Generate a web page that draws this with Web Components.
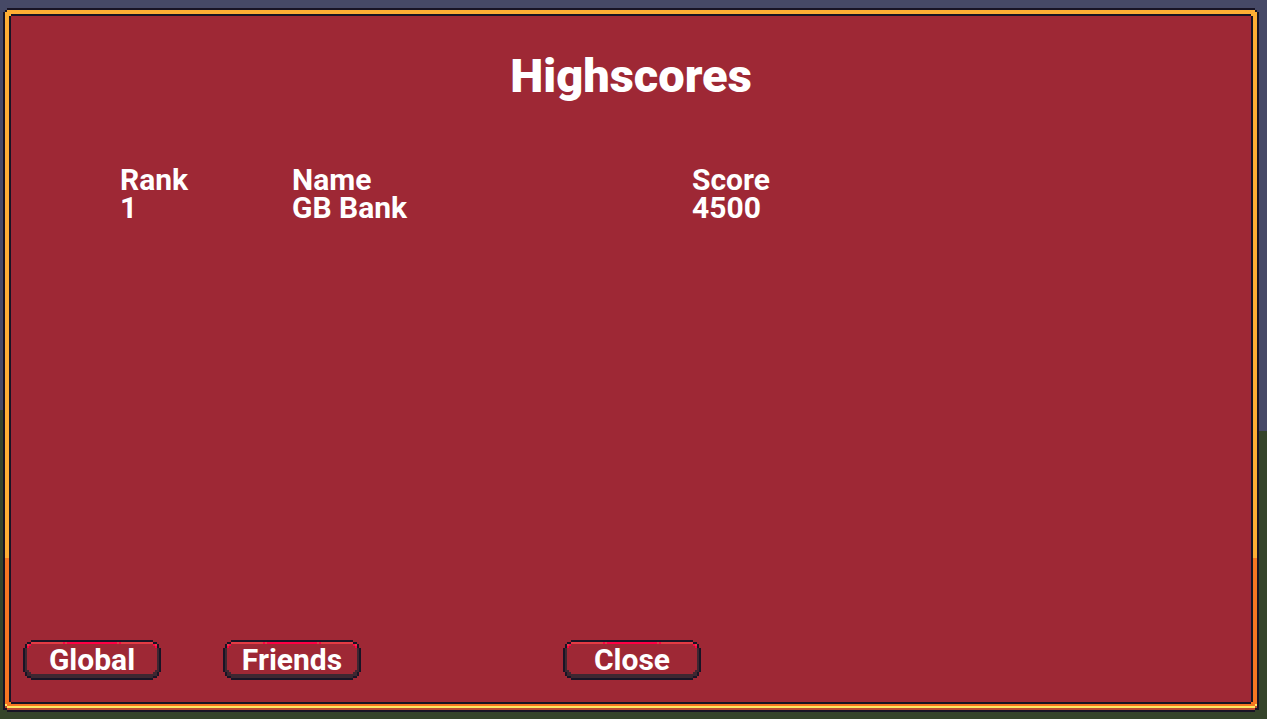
<!DOCTYPE html>
<html lang="en">
<head>
<meta charset="utf-8">
<meta name="viewport" content="width=device-width, initial-scale=1">
<title>Highscores</title>
<style>
  body {
    margin: 0;
    color: #fff;
    font-family: Roboto, "Liberation Sans", sans-serif;
    background: #3a4466;
  }
</style>
</head>
<body>
<highscores-screen></highscores-screen>

<script>
class PixelFrame extends HTMLElement {
  constructor() {
    super();
    this.attachShadow({ mode: 'open' });
    this.shadowRoot.innerHTML = `
      <style>
        :host {
          --cut: polygon(
            2px 0, calc(100% - 2px) 0, calc(100% - 2px) 2px, 100% 2px,
            100% calc(100% - 2px), calc(100% - 2px) calc(100% - 2px),
            calc(100% - 2px) 100%, 2px 100%, 2px calc(100% - 2px),
            0 calc(100% - 2px), 0 2px, 2px 2px);
          display: flex;
          flex: 1;
          padding: 2px;
          background: #181425;
          clip-path: polygon(
            4px 0, calc(100% - 4px) 0, calc(100% - 4px) 2px, calc(100% - 2px) 2px,
            calc(100% - 2px) 4px, 100% 4px, 100% calc(100% - 2px),
            calc(100% - 4px) calc(100% - 2px), calc(100% - 4px) 100%,
            4px 100%, 4px calc(100% - 2px), 0 calc(100% - 2px),
            0 4px, 2px 4px, 2px 2px, 4px 2px);
        }
        .gold, .rim { display: flex; flex: 1; clip-path: var(--cut); }
        .gold {
          padding: 4px 4px 6px;
          background:
            linear-gradient(#fee761, #fee761) left bottom 4px / 2px 2px no-repeat,
            linear-gradient(#fee761, #fee761) right bottom 4px / 2px 2px no-repeat,
            linear-gradient(#be4a2f, #be4a2f) left bottom 2px / 2px 2px no-repeat,
            linear-gradient(#be4a2f, #be4a2f) right bottom 2px / 2px 2px no-repeat,
            linear-gradient(#fee761 50%, #be4a2f 50%) bottom / 100% 4px no-repeat,
            linear-gradient(#feae34 78.3%, #f77622 78.3%);
        }
        .rim { padding: 2px; background: #181425; }
        .body { display: flex; flex: 1; flex-direction: column; background: #9e2835; }
      </style>
      <div class="gold"><div class="rim"><div class="body"><slot></slot></div></div></div>
    `;
  }
}

class PixelButton extends HTMLElement {
  constructor() {
    super();
    this.attachShadow({ mode: 'open' });
    this.shadowRoot.innerHTML = `
      <style>
        :host { display: inline-block; }
        button {
          display: grid;
          place-items: center;
          width: 138px;
          height: 40px;
          padding: 0;
          border: 0;
          background: none;
          color: inherit;
          font: 700 30px/40px Roboto, "Liberation Sans", sans-serif;
          cursor: pointer;
        }
        svg, span { grid-area: 1 / 1; }
        svg { display: block; width: 138px; height: 40px; }
        button:active span { opacity: 0.8; }
      </style>
      <button type="button">
        <svg viewBox="0 0 69 20" shape-rendering="crispEdges" aria-hidden="true">
          <path fill="#3e2731" d="M1 4h1v11h1v1h1v1h61v-1h1v-1h1V4h1v12h-1v2h-2v1H4v-1H2v-2H1z"/>
          <path fill="#e43b44" d="M4 1h61v1H4zM2 2h1v1H2zM66 2h1v1h-1z"/>
          <path fill="#ff0044" d="M22 1h25v1H22zM20 1h1v1h-1zM48 1h1v1h-1zM3 2h1v1H3zM65 2h1v1h-1zM2 3h1v1H2zM66 3h1v1h-1z"/>
          <path fill="#181425" d="M4 0h61v1H4zM2 1h2v1H2zM65 1h2v1h-2zM1 2h1v2H1zM67 2h1v2h-1zM0 4h1v12H0zM68 4h1v12h-1zM1 16h1v2H1zM67 16h1v2h-1zM2 18h2v1H2zM65 18h2v1h-2zM4 19h61v1H4z"/>
        </svg>
        <span><slot></slot></span>
      </button>
    `;
  }
}

class ScoreTable extends HTMLElement {
  connectedCallback() {
    const scores = JSON.parse(this.getAttribute('scores') || '[]');
    this.attachShadow({ mode: 'open' });
    this.shadowRoot.innerHTML = `
      <style>
        :host { display: block; }
        table { border-collapse: collapse; font-size: 30px; font-weight: 700; line-height: 28px; }
        th, td { padding: 0; text-align: left; white-space: nowrap; }
        .rank { width: 172px; }
        .name { width: 400px; }
      </style>
      <table>
        <thead>
          <tr><th class="rank">Rank</th><th class="name">Name</th><th>Score</th></tr>
        </thead>
        <tbody>
          ${scores.map((s) => `<tr><td>${s.rank}</td><td>${s.name}</td><td>${s.score}</td></tr>`).join('')}
        </tbody>
      </table>
    `;
  }
}

class HighscoresScreen extends HTMLElement {
  constructor() {
    super();
    this.attachShadow({ mode: 'open' });
    this.shadowRoot.innerHTML = `
      <style>
        :host {
          display: flex;
          box-sizing: border-box;
          min-height: 100vh;
          padding: 8px 8px 7px 3px;
          background:
            linear-gradient(#464966 60%, #35442a 60%) right / 8px 100% no-repeat,
            linear-gradient(#464966 57%, #35442a 57%);
        }
        h1 {
          margin: 0;
          padding-top: 32px;
          text-align: center;
          font-size: 47px;
          font-weight: 900;
          line-height: 56px;
        }
        score-table { margin: 62px 0 0 109px; }
        nav {
          display: grid;
          grid-template-columns: 200px 340px auto;
          justify-content: start;
          margin-top: auto;
          padding: 0 12px 22px;
        }
      </style>
      <pixel-frame>
        <h1>Highscores</h1>
        <score-table scores='[{"rank":1,"name":"GB Bank","score":4500}]'></score-table>
        <nav>
          <pixel-button>Global</pixel-button>
          <pixel-button>Friends</pixel-button>
          <pixel-button>Close</pixel-button>
        </nav>
      </pixel-frame>
    `;
  }
}

customElements.define('pixel-frame', PixelFrame);
customElements.define('pixel-button', PixelButton);
customElements.define('score-table', ScoreTable);
customElements.define('highscores-screen', HighscoresScreen);
</script>
</body>
</html>
